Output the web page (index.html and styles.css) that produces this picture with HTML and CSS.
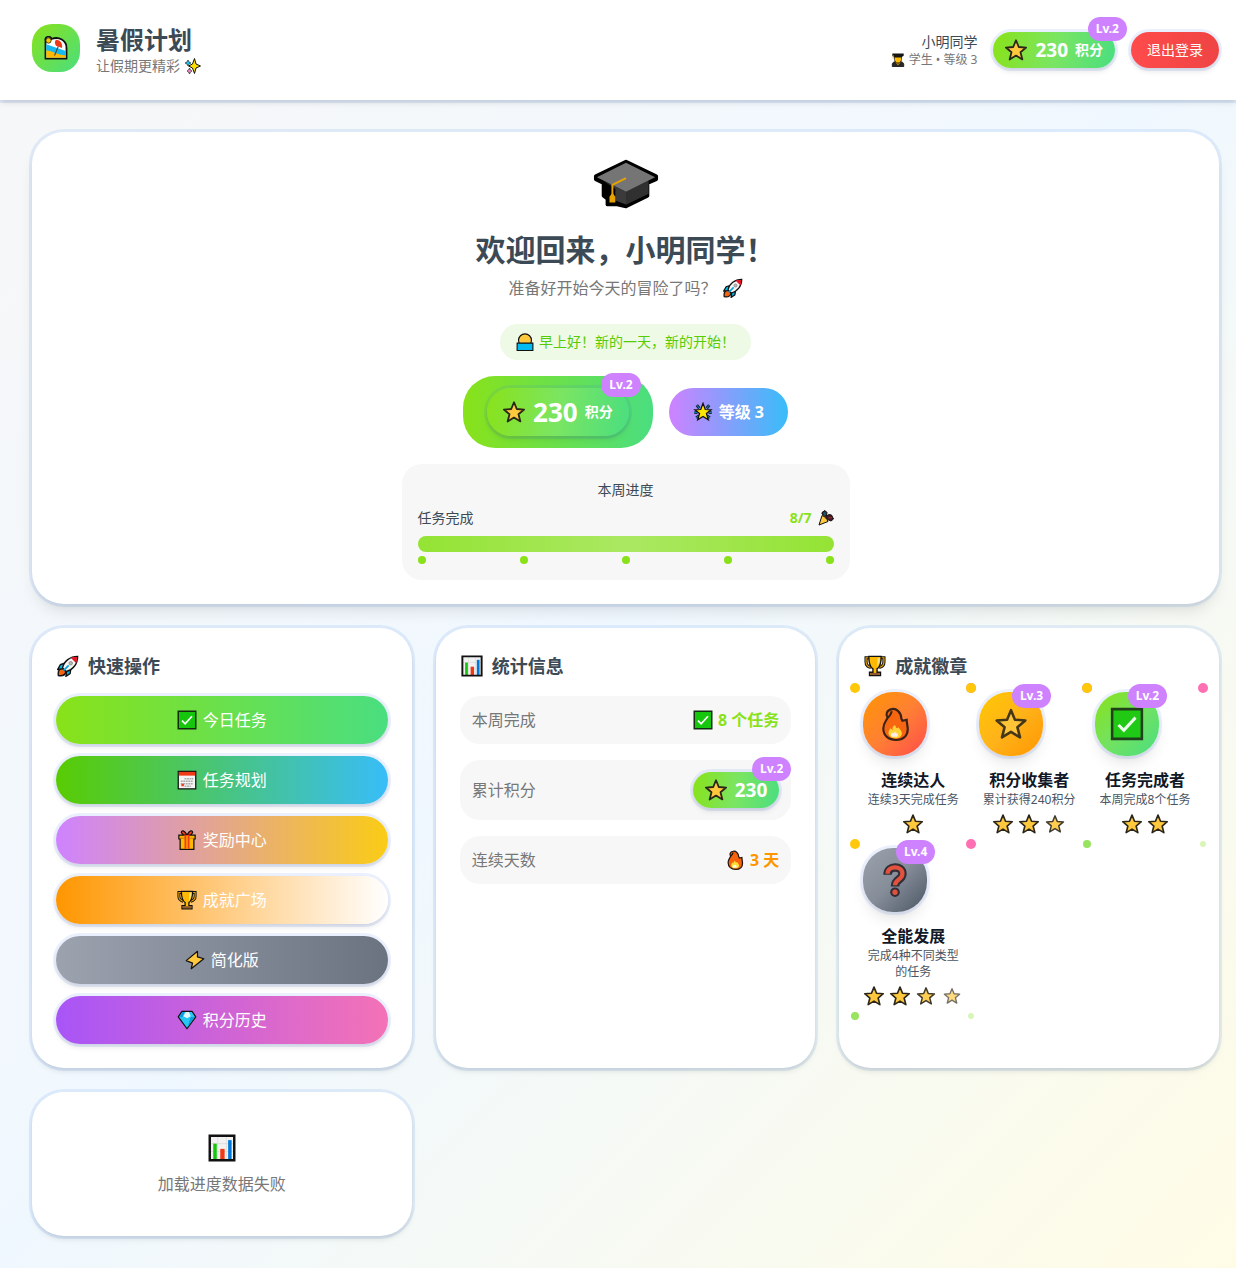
FILE: index.html
```html
<!DOCTYPE html>
<html lang="zh-CN">
<head>
<meta charset="utf-8">
<meta name="viewport" content="width=device-width, initial-scale=1">
<title>暑假计划</title>
<link rel="stylesheet" href="styles.css">
</head>
<body>
<svg class="sprite" aria-hidden="true">
  <symbol id="star" viewBox="0 0 32 32"><path d="M16 3l3.7 9 9.8.7-7.5 6.3 2.500 9.600L16 23.400 7.500 28.600 10 19 2.500 12.700l9.800-.7z" fill="#ffc83d" stroke="#2b2618" stroke-width="2.400" stroke-linejoin="round"/></symbol>
  <symbol id="check" viewBox="0 0 32 32"><path d="M2 2h28v28H2z" fill="#16c60c" stroke="#152a12" stroke-width="2.400"/><path d="M8 17l5 5L24 10" fill="none" stroke="#fff" stroke-width="2.800"/></symbol>
  <symbol id="chart" viewBox="0 0 32 32"><path d="M2 2h28v28H2z" fill="#f2f2f2"/><path d="M2 11h28M2 20h28M11 2v28M21 2v28" stroke="#ddd"/><path d="M6 11h4v19H6z" fill="#16c60c"/><path d="M14 17h5v13h-5z" fill="#f03a17"/><path d="M23 7h4v23h-4z" fill="#0078d7"/><path d="M2 2h28v28H2z" fill="none" stroke="#111" stroke-width="2.800"/></symbol>
  <symbol id="trophy" viewBox="0 0 32 32"><path d="M8 4H3v6c0 5 3 7 7 8M24 4h5v6c0 5-3 7-7 8" fill="none" stroke="#111" stroke-width="4.600"/><path d="M8 4H3v6c0 5 3 7 7 8M24 4h5v6c0 5-3 7-7 8" fill="none" stroke="#e9a100" stroke-width="1.800"/><path d="M7 2h18c0 10-1 15-6 18v5h5v5H8v-5h5v-5C8 17 7 12 7 2z" fill="#ffb900" stroke="#111" stroke-width="2"/><path d="M20 4h3c0 6-1 10-4 13z" fill="#ffe17a"/><path d="M9 26h14v3H9z" fill="#8e562e"/></symbol>
  <symbol id="fire" viewBox="0 0 32 32"><path d="M13 2c4-1 9 3 9 9l1 2 4-1c0 3 1 6 1 9 0 6-4 10-11 10S5 27 5 20c0-5 3-7 4-10-2-3-1-7 4-8z" fill="#f7630c" stroke="#201512" stroke-width="2"/><path d="M9 10c2-1 3-3 4-6" fill="none" stroke="#201512" stroke-width="2"/><path d="M16 17c1 3 2 4 3 2 3 3 5 6 2 9-2 2-8 2-10-1-2-2-1-5 1-7l2 2c-1-2 0-4 2-5z" fill="#ffdf3a"/><path d="M16 23c2 2 4 3 2 5h-5c-2-2 0-3 1-4l1 1z" fill="#fff"/></symbol>
  <symbol id="rocket" viewBox="0 0 32 32"><path d="M2 30c-1-6 1-10 6-11l5 5c-1 5-5 7-11 6z" fill="#f7630c" stroke="#111" stroke-width="2"/><path d="M11 12l-6 2-4 7 8-1zM20 21l-1 6-6 4 1-8z" fill="#00bcf2" stroke="#111" stroke-width="2"/><path d="M8 19C10 9 19 2 30 2c0 11-7 20-17 22z" fill="#f5f5f5" stroke="#111" stroke-width="2"/><path d="M20 4c4-1 7-1 9-1 0 2 0 5-1 9z" fill="#e81224"/><circle cx="20" cy="12" r="2.500" fill="#bbb" stroke="#777"/><path d="M9 23l8-8" stroke="#00a2dc" stroke-width="2.400"/></symbol>
  <symbol id="calendar" viewBox="0 0 32 32"><path d="M2 2h28v28H2z" fill="#f4f4f4" stroke="#111" stroke-width="2"/><path d="M3 3h26v6H3z" fill="#f03a17"/><path d="M12 14h14M6 18h20M6 22h20M12 26h10" stroke="#aaa" stroke-width="2.600" stroke-dasharray="3 1"/><path d="M7 22h4v4H7z" fill="#f03a17"/></symbol>
  <symbol id="gift" viewBox="0 0 32 32"><path d="M16 8C12 0 7 0 7 4l3 4M16 8c4-8 9-8 9-4l-3 4" fill="#f03a17" stroke="#111" stroke-width="2"/><path d="M3 8h26v6h-2v17H5V14H3z" fill="#ffb900" stroke="#111" stroke-width="2"/><path d="M4 13h24" stroke="#c77c00" stroke-width="1.500"/><path d="M12 8h8v22h-8z" fill="#f03a17"/><path d="M16 9v21" stroke="#ffb900" stroke-width="2"/></symbol>
  <symbol id="bolt" viewBox="0 0 32 32"><path d="M20 2L2 17l10 4-2 9 20-16-10-3z" fill="#ffc83d" stroke="#111" stroke-width="2" stroke-linejoin="round"/></symbol>
  <symbol id="gem" viewBox="0 0 32 32"><path d="M8 2h16l6 9-14 19L2 11z" fill="#26c6f5" stroke="#111" stroke-width="2" stroke-linejoin="round"/><path d="M9 3h3l-3 8H4zM22 11h6L17 27z" fill="#0a9bd8"/><path d="M14 3h5l3 7-6 3-6-3z" fill="#e2faff"/></symbol>
  <symbol id="question" viewBox="0 0 32 32"><path d="M9 11c0-9 14-9 14-1 0 6-7 5-7 12" fill="none" stroke="#27222a" stroke-width="8"/><circle cx="16" cy="27.500" r="4.500" fill="#27222a"/><path d="M9 10c0-8 14-8 14 0 0 6-7 5-7 11" fill="none" stroke="#f04a32" stroke-width="4"/><circle cx="16" cy="27.500" r="2.500" fill="#f04a32"/></symbol>
  <symbol id="beach" viewBox="0 0 32 32"><path d="M2 30V6a4 4 0 0 1 8-2c10-4 20 2 20 12v14z" fill="#fff" stroke="#111" stroke-width="2.400"/><path d="M3 11l26 9v9H3z" fill="#18b9ef"/><path d="M3 19c9 1 14 6 26 7v3H3z" fill="#ffb900"/><path d="M11 9C16 1 29 6 28 17l-8-2z" fill="#fff"/><path d="M16 5c6 0 9 5 8 11l-8-3c-2-3-2-6 0-8z" fill="#f03a17"/><circle cx="6" cy="6" r="3.500" fill="#ffc700" stroke="#111"/><path d="M19 14l-5 12" stroke="#444" stroke-width="1.400"/></symbol>
  <symbol id="sparkles" viewBox="0 0 32 32"><path d="M19 1l3 11 9 4-9 4-3 11-4-11-8-4 8-4z" fill="#ffe100" stroke="#111" stroke-width="2"/><path d="M6 4l2 4 4 2-4 2-2 4-2-4-4-2 4-2z" fill="#19c5f0" stroke="#111" stroke-width="1.200"/><path d="M9 20l2 4 3 2-3 2-2 4-2-4-3-2 3-2z" fill="#ee83c1" stroke="#111" stroke-width="1.200"/></symbol>
  <symbol id="student" viewBox="0 0 32 32"><path d="M3 31v-5c0-4 4-6 7-6h12c3 0 7 2 7 6v5z" fill="#292929" stroke="#111" stroke-width="2"/><path d="M8 8h16v7c0 4-4 8-8 8s-8-4-8-8z" fill="#ffb900" stroke="#111" stroke-width="1.600"/><path d="M3 1h26v5l-6 4H9L3 7z" fill="#151515"/><path d="M5 5v8M12 22l4 5 4-5" fill="none" stroke="#f2a600" stroke-width="2"/></symbol>
  <symbol id="sunrise" viewBox="0 0 32 32"><circle cx="16" cy="13" r="11.500" fill="#ffc83d" stroke="#111" stroke-width="2"/><path d="M2 18h28v13H2z" fill="#00bcf2" stroke="#111" stroke-width="2"/></symbol>
  <symbol id="glow" viewBox="0 0 32 32"><path d="M6 5l4 5M26 5l-4 5M2 17h5M30 17h-5M5 25l5-3M27 25l-5-3" stroke="#123" stroke-width="4.600"/><path d="M6 5l4 5M26 5l-4 5M2 17h5M30 17h-5M5 25l5-3M27 25l-5-3" stroke="#178ac0" stroke-width="1.600"/><path d="M16 2l3.600 10 9.400.5-7.500 6 3 10L16 23l-8.500 5.500 3-10-7.500-6 9.400-.5z" fill="#ffe600" stroke="#111" stroke-width="2"/></symbol>
  <symbol id="party" viewBox="0 0 32 32"><path d="M8 5l6-4 4 4-1 7 5-3 5 1 4 8-5 4-7-3-6-7-5-4z" fill="#431a22" stroke="#111" stroke-width="2"/><path d="M10 6l5-3 1 7-3 1z" fill="#145c70"/><path d="M21 16l7-1" stroke="#8d2630" stroke-width="3"/><path d="M8 11L2 30l18-7C18 18 14 13 8 11z" fill="#ffc83d" stroke="#111" stroke-width="2"/></symbol>
  <symbol id="cap" viewBox="0 0 70 54"><path d="M35 4L4 19v3l8 4v13l4 3v6h10l9 2 22-11V26l9-4v-3z" fill="#000" stroke="#000" stroke-width="4" stroke-linejoin="round"/><path d="M12 24l23 11 23-11v13L35 48l-11-4V32z" fill="#3b3b3b"/><path d="M35 35l23-11v13L35 48z" fill="#303030"/><path d="M35 5L5 20l30 15 30-15z" fill="#757575"/><path d="M35 21l-14 7v12" fill="none" stroke="#e8a200" stroke-width="2"/><path d="M21 36l3 4v6h-6v-6z" fill="#e8a200"/></symbol>
</svg>

<header class="topbar">
  <div class="brand">
    <div class="logo"><svg class="icon-lg"><use href="#beach"/></svg></div>
    <div>
      <h1 class="brand-name">暑假计划</h1>
      <p class="brand-sub">让假期更精彩 <svg class="icon-xs"><use href="#sparkles"/></svg></p>
    </div>
  </div>
  <div class="account">
    <div class="user">
      <p class="user-name">小明同学</p>
      <p class="user-role"><svg class="icon-xs"><use href="#student"/></svg>学生 • 等级 3</p>
    </div>
    <div class="score"><svg class="icon-md"><use href="#star"/></svg><span class="score-num">230</span><span class="score-unit">积分</span><span class="level">Lv.2</span></div>
    <button class="logout" type="button">退出登录</button>
  </div>
</header>

<main class="page">
  <section class="card hero">
    <svg class="cap"><use href="#cap"/></svg>
    <h2 class="hero-title">欢迎回来，小明同学！</h2>
    <p class="hero-sub">准备好开始今天的冒险了吗？<svg class="icon-sm"><use href="#rocket"/></svg></p>
    <p class="greeting"><svg class="icon-sm"><use href="#sunrise"/></svg>早上好！新的一天，新的开始！</p>
    <div class="hero-stats">
      <div class="score-frame">
        <div class="score score-large"><svg class="icon-md"><use href="#star"/></svg><span class="score-num">230</span><span class="score-unit">积分</span><span class="level">Lv.2</span></div>
      </div>
      <div class="rank"><svg class="icon-sm"><use href="#glow"/></svg>等级 3</div>
    </div>
    <div class="week">
      <p>本周进度</p>
      <div class="week-row"><span>任务完成</span><span class="week-value">8/7 <svg class="icon-xs"><use href="#party"/></svg></span></div>
      <div class="bar" role="progressbar" aria-label="任务完成" aria-valuemin="0" aria-valuemax="7" aria-valuenow="7"></div>
      <div class="ticks"><i></i><i></i><i></i><i></i><i></i></div>
    </div>
  </section>

  <div class="grid">
    <section class="card">
      <h3 class="card-title"><svg class="icon-lg"><use href="#rocket"/></svg>快速操作</h3>
      <div class="actions">
        <button type="button" class="action today"><svg class="icon-sm"><use href="#check"/></svg>今日任务</button>
        <button type="button" class="action plan"><svg class="icon-sm"><use href="#calendar"/></svg>任务规划</button>
        <button type="button" class="action reward"><svg class="icon-sm"><use href="#gift"/></svg>奖励中心</button>
        <button type="button" class="action plaza"><svg class="icon-sm"><use href="#trophy"/></svg>成就广场</button>
        <button type="button" class="action simple"><svg class="icon-sm"><use href="#bolt"/></svg>简化版</button>
        <button type="button" class="action history"><svg class="icon-sm"><use href="#gem"/></svg>积分历史</button>
      </div>
    </section>

    <section class="card">
      <h3 class="card-title"><svg class="icon-lg"><use href="#chart"/></svg>统计信息</h3>
      <div class="stats">
        <div class="stat"><span>本周完成</span><strong class="stat-value green"><svg class="icon-sm"><use href="#check"/></svg>8 个任务</strong></div>
        <div class="stat"><span>累计积分</span><div class="score"><svg class="icon-md"><use href="#star"/></svg><span class="score-num">230</span><span class="level">Lv.2</span></div></div>
        <div class="stat"><span>连续天数</span><strong class="stat-value orange"><svg class="icon-sm"><use href="#fire"/></svg>3 天</strong></div>
      </div>
    </section>

    <section class="card">
      <h3 class="card-title badges-title"><svg class="icon-lg"><use href="#trophy"/></svg>成就徽章</h3>
      <div class="badges">
        <article class="badge">
          <i class="dot tl"></i><i class="dot tr"></i><i class="dot bl"></i><i class="dot br"></i>
          <div class="medal streak"><svg class="icon-xl"><use href="#fire"/></svg></div>
          <h4>连续达人</h4><p>连续3天完成任务</p>
          <div class="stars"><svg><use href="#star"/></svg></div>
        </article>
        <article class="badge">
          <i class="dot tl"></i><i class="dot tr"></i><i class="dot bl"></i><i class="dot br"></i>
          <div class="medal points"><svg class="icon-xl"><use href="#star"/></svg><span class="level">Lv.3</span></div>
          <h4>积分收集者</h4><p>累计获得240积分</p>
          <div class="stars"><svg><use href="#star"/></svg><svg><use href="#star"/></svg><svg><use href="#star"/></svg></div>
        </article>
        <article class="badge">
          <i class="dot tl"></i><i class="dot tr"></i><i class="dot bl"></i><i class="dot br"></i>
          <div class="medal done"><svg class="icon-xl"><use href="#check"/></svg><span class="level">Lv.2</span></div>
          <h4>任务完成者</h4><p>本周完成8个任务</p>
          <div class="stars"><svg><use href="#star"/></svg><svg><use href="#star"/></svg></div>
        </article>
        <article class="badge">
          <i class="dot tl"></i><i class="dot tr"></i><i class="dot bl"></i><i class="dot br"></i>
          <div class="medal locked"><svg class="icon-xl"><use href="#question"/></svg><span class="level">Lv.4</span></div>
          <h4>全能发展</h4><p>完成4种不同类型的任务</p>
          <div class="stars"><svg><use href="#star"/></svg><svg><use href="#star"/></svg><svg><use href="#star"/></svg><svg><use href="#star"/></svg></div>
        </article>
      </div>
    </section>

    <section class="card empty">
      <svg><use href="#chart"/></svg>
      <p>加载进度数据失败</p>
    </section>
  </div>
</main>
</body>
</html>
```
FILE: styles.css
```css
* { box-sizing: border-box; }

:root {
  --ink: #3c4a56;
  --muted: #777;
  --green: #89e219;
  --ring: 0 0 0 3px rgba(80, 140, 235, .13);
  --ring-soft: 0 0 0 3px rgba(59, 110, 246, .1);
  --lift: 0 4px 6px -1px rgba(0, 0, 0, .1), 0 2px 4px -1px rgba(0, 0, 0, .06);
}

body {
  margin: 0;
  min-height: 100vh;
  font: 400 16px/24px "Noto Sans", "Noto Sans CJK SC", sans-serif;
  color: var(--ink);
  background: linear-gradient(135deg, #f7f7f7 0%, #f0f8ff 50%, #fffce6 100%);
}

h1, h2, h3, h4, p { margin: 0; }
button { border: 0; font: inherit; color: #fff; cursor: pointer; }
svg { display: block; flex: none; }
.sprite { position: absolute; width: 0; height: 0; }
.icon-xs { width: 16px; height: 16px; }
.icon-sm { width: 20px; height: 20px; }
.icon-md { width: 24px; height: 24px; }
.icon-lg { width: 24px; height: 24px; }
.icon-xl { width: 34px; height: 34px; }

.topbar {
  display: flex;
  justify-content: space-between;
  padding: 24px 17px 24px 32px;
  background: #fff;
  box-shadow: var(--ring), var(--lift);
}
.brand { display: flex; gap: 16px; }
.logo {
  display: grid;
  place-items: center;
  width: 48px;
  height: 48px;
  border-radius: 20px;
  background: linear-gradient(135deg, var(--green), #4ade80);
}
.brand-name { font-size: 24px; line-height: 32px; }
.brand-sub { display: flex; align-items: center; gap: 5px; font-size: 14px; line-height: 20px; color: var(--muted); }
.account { display: flex; align-items: center; gap: 16px; }
.user { text-align: right; }
.user-name { font-size: 14px; line-height: 20px; }
.user-role { display: flex; align-items: center; justify-content: flex-end; gap: 4px; font-size: 12px; line-height: 16px; color: var(--muted); }
.user-role .icon-xs { width: 14px; height: 14px; }

.score {
  position: relative;
  display: flex;
  align-items: center;
  gap: 7px;
  height: 36px;
  padding: 0 12px 0 11px;
  border-radius: 24px;
  color: #fff;
  font-weight: 700;
  background: linear-gradient(100deg, var(--green), #7be562 50%, #4ade80);
  box-shadow: var(--ring-soft), var(--lift);
}
.score-num { font-size: 19px; }
.score-unit { font-size: 14px; }
.score-large { height: 48px; padding: 0 16px 0 15px; }
.score-large .score-num { font-size: 26px; }
.level {
  position: absolute;
  top: -15px;
  right: -12px;
  padding: 0 8px;
  border-radius: 12px;
  color: #fff;
  font-size: 12px;
  font-weight: 700;
  line-height: 24px;
  background: #ce82ff;
}
.logout {
  height: 36px;
  padding: 0 16px;
  border-radius: 20px;
  font-size: 14px;
  background: linear-gradient(90deg, #ff4b4b, #ef4444);
  box-shadow: var(--ring-soft), var(--lift);
}

.page { padding: 32px 17px 32px 32px; }
.card {
  padding: 24px;
  border-radius: 32px;
  background: #fff;
  box-shadow: var(--ring), var(--lift);
}
.hero {
  display: flex;
  flex-direction: column;
  align-items: center;
  margin-bottom: 24px;
  box-shadow: var(--ring), 0 10px 15px -3px rgba(0, 0, 0, .1), 0 4px 6px -2px rgba(0, 0, 0, .05);
}
.cap { width: 68px; height: 56px; margin-bottom: 20px; }
.hero-title { margin-bottom: 8px; font-size: 30px; line-height: 36px; }
.hero-sub { display: flex; align-items: center; gap: 6px; margin-bottom: 24px; color: var(--muted); }
.greeting {
  display: flex;
  align-items: center;
  gap: 5px;
  margin-bottom: 16px;
  padding: 8px 16px;
  border-radius: 20px;
  font-size: 14px;
  line-height: 20px;
  color: #58cc02;
  background: #eef9e6;
}
.greeting .icon-sm { width: 18px; height: 18px; }
.hero-stats { display: flex; align-items: center; gap: 16px; margin-bottom: 16px; }
.score-frame {
  padding: 12px 24px;
  border-radius: 32px;
  background: linear-gradient(90deg, var(--green), #4ade80);
}
.rank {
  display: flex;
  align-items: center;
  gap: 6px;
  padding: 12px 24px;
  border-radius: 24px;
  font-weight: 700;
  color: #fff;
  background: linear-gradient(90deg, #ce82ff, #38bdf8);
}
.week {
  width: 100%;
  max-width: 448px;
  padding: 16px;
  border-radius: 20px;
  font-size: 14px;
  line-height: 20px;
  text-align: center;
  background: #f7f7f7;
}
.week-row { display: flex; justify-content: space-between; margin: 8px 0; }
.week-value { display: flex; align-items: center; gap: 6px; font-weight: 700; color: var(--green); }
.bar { height: 16px; border-radius: 8px; background: linear-gradient(90deg, #94e334, #aae862 50%, #94e334); }
.ticks { display: flex; justify-content: space-between; margin-top: 4px; }
.ticks i { width: 8px; height: 8px; border-radius: 50%; background: var(--green); }

.grid { display: grid; grid-template-columns: repeat(3, minmax(0, 1fr)); gap: 24px; }
.card-title { display: flex; align-items: center; gap: 8px; margin-bottom: 16px; font-size: 18px; line-height: 28px; }
.card-title .icon-lg { padding: 1px; }
.actions { display: grid; gap: 12px; }
.action {
  display: flex;
  align-items: center;
  justify-content: center;
  gap: 6px;
  height: 48px;
  border-radius: 24px;
  box-shadow: var(--ring-soft), var(--lift);
}
.today { background: linear-gradient(90deg, var(--green), #4ade80); }
.plan { background: linear-gradient(90deg, #58cc02, #38bdf8); }
.reward { background: linear-gradient(90deg, #ce82ff, #facc15); }
.plaza { background: linear-gradient(90deg, #ff9600, #fff); }
.simple { background: linear-gradient(90deg, #9ca3af, #6b7280); }
.history { background: linear-gradient(90deg, #a855f7, #f472b6); }

.stats { display: grid; gap: 16px; }
.stat {
  display: flex;
  align-items: center;
  justify-content: space-between;
  padding: 12px;
  border-radius: 20px;
  color: var(--muted);
  background: #f7f7f7;
}
.stat-value { display: flex; align-items: center; gap: 5px; }
.green { color: var(--green); }
.orange { color: #ff9600; }

.badges-title { margin-bottom: 12px; }
.badges { display: grid; grid-template-columns: repeat(3, minmax(0, 1fr)); gap: 12px 16px; }
.badge { position: relative; text-align: center; }
.medal {
  position: relative;
  display: grid;
  place-items: center;
  width: 64px;
  height: 64px;
  margin-bottom: 12px;
  border-radius: 30px;
  box-shadow: var(--ring-soft), 0 10px 15px -3px rgba(0, 0, 0, .1), 0 4px 6px -2px rgba(0, 0, 0, .05);
}
.medal svg { opacity: .88; }
.medal .level { top: -8px; right: -8px; }
.streak { background: linear-gradient(135deg, #ff9600, #ff8034 50%, #ff4b4b); }
.points { background: linear-gradient(135deg, #ffc800, #ffb31a 50%, #ff9600); }
.done { background: linear-gradient(135deg, var(--green), #73e260 50%, #4ade80); }
.locked { background: linear-gradient(135deg, #9ca3af, #858d99 50%, #4b5563); }
.badge h4 { font-size: 16px; line-height: 24px; color: #111827; }
.badge p { font-size: 12px; line-height: 16px; color: #4b5563; }
.stars { display: flex; justify-content: center; align-items: center; gap: 4px; height: 24px; margin-top: 4px; }
.stars svg { width: 22px; height: 22px; }
.stars svg:nth-child(3) { padding: 1px; opacity: .9; }
.stars svg:nth-child(4) { padding: 2px; opacity: .65; }
.dot { position: absolute; width: 10px; height: 10px; border-radius: 50%; }
.tl { top: -9px; left: -13px; background: #ffc80a; }
.tr { top: -9px; right: -13px; background: #ff70b3; }
.bl { bottom: -12px; left: -12px; width: 8px; height: 8px; background: #98e35f; }
.br { bottom: -11px; right: -11px; width: 6px; height: 6px; background: #d9f6b8; }

.empty { display: flex; flex-direction: column; align-items: center; gap: 8px; padding: 40px 24px; color: var(--muted); }
.empty svg { width: 28px; height: 32px; }
```
